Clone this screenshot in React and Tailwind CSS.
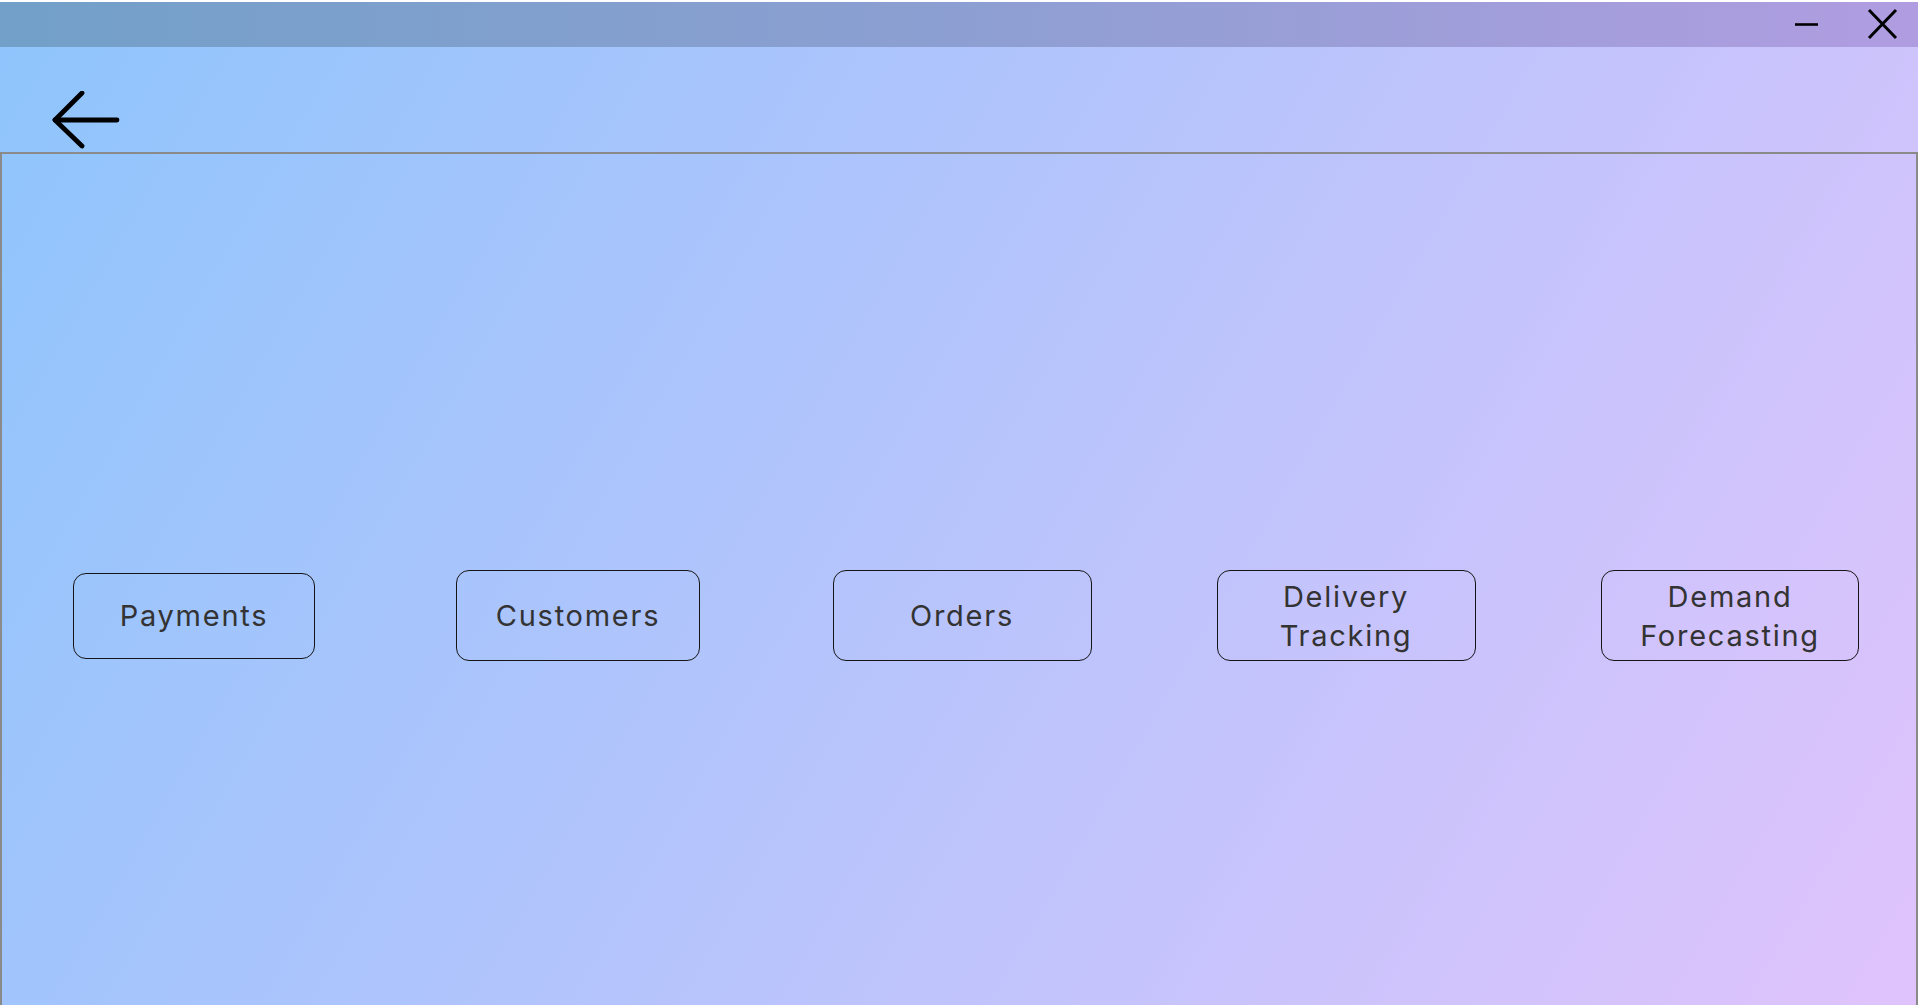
const modules = [
  { label: ['Payments'], width: 'w-[242px]', height: 'h-[86px]' },
  { label: ['Customers'], width: 'w-[244px]', height: 'h-[91px]' },
  { label: ['Orders'], width: 'w-[259px]', height: 'h-[91px]' },
  { label: ['Delivery', 'Tracking'], width: 'w-[259px]', height: 'h-[91px]' },
  { label: ['Demand', 'Forecasting'], width: 'w-[258px]', height: 'h-[91px]' },
]

function BackArrow() {
  return (
    <svg width="70" height="60" viewBox="0 0 70 60" fill="none" stroke="#000" strokeWidth="4.8" strokeLinecap="round" strokeLinejoin="round">
      <path d="M3 29 L65 29" />
      <path d="M30 2 L3 29 L30 55" />
    </svg>
  )
}

function ModuleButton({ item }) {
  return (
    <button
      type="button"
      className={`${item.width} ${item.height} flex flex-col items-center justify-center rounded-[13px] border-[1.5px] border-[#151515] bg-transparent font-['Inter','Liberation_Sans',sans-serif] text-[29px] leading-[39px] tracking-[0.06em] text-[#333]`}
    >
      {item.label.map((line) => (
        <span key={line}>{line}</span>
      ))}
    </button>
  )
}

export default function App() {
  return (
    <div className="flex h-[1005px] w-[1918px] flex-col overflow-hidden bg-[linear-gradient(120deg,#8ec5fc_0%,#e0c3fc_100%)]">
      <div className="h-[2px] bg-white" />

      <header className="flex h-[45px] items-center justify-end bg-[linear-gradient(90deg,#72a0c8_0%,#8d9fd2_50%,#b09de1_100%)]">
        <svg width="24" height="45" viewBox="0 0 24 45" className="mr-[48px]">
          <path d="M0 22.5 L23 22.5" stroke="#000" strokeWidth="2.6" />
        </svg>
        <svg width="31" height="45" viewBox="0 0 31 45" className="mr-[20px]">
          <path d="M2 8 L29 36 M29 8 L2 36" stroke="#000" strokeWidth="3" />
        </svg>
      </header>

      <div className="h-[105px] pl-[52px] pt-[44px]">
        <BackArrow />
      </div>

      <main className="flex-1 border-x-2 border-t-2 border-[#8a8a8a]">
        <div className="grid grid-cols-[repeat(5,384px)] items-center justify-items-center pt-[416px]">
          {modules.map((item) => (
            <ModuleButton key={item.label.join(' ')} item={item} />
          ))}
        </div>
      </main>
    </div>
  )
}
